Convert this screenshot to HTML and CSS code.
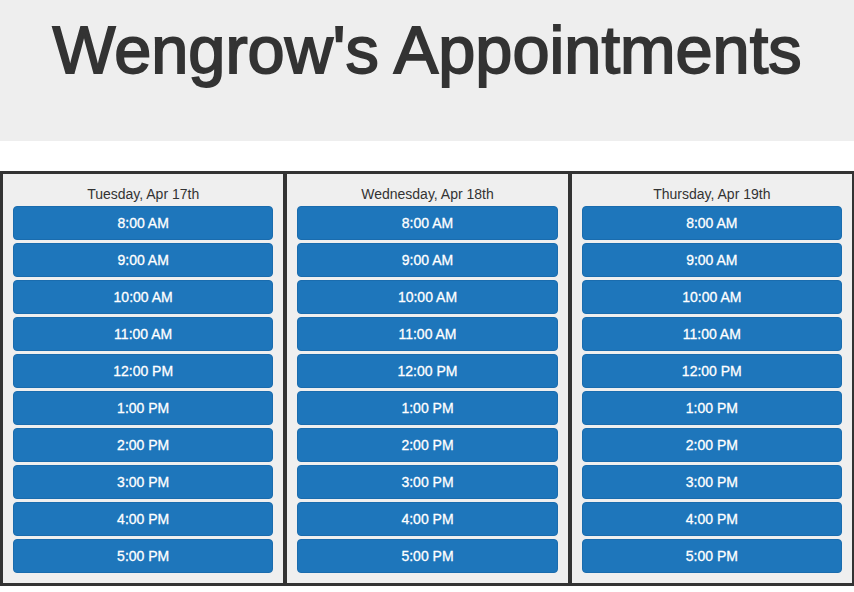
FILE: index.html
```html
<!DOCTYPE html>
<html lang="en">
<head>
<meta charset="utf-8">
<title>Wengrow's Appointments</title>
<link rel="stylesheet" href="styles.css">
</head>
<body>
<header class="jumbotron">
  <h1 class="title">Wengrow's Appointments</h1>
</header>
<main class="days">
  <section class="day">
    <div class="day-label">Tuesday, Apr 17th</div>
    <button class="slot">8:00 AM</button>
    <button class="slot">9:00 AM</button>
    <button class="slot">10:00 AM</button>
    <button class="slot">11:00 AM</button>
    <button class="slot">12:00 PM</button>
    <button class="slot">1:00 PM</button>
    <button class="slot">2:00 PM</button>
    <button class="slot">3:00 PM</button>
    <button class="slot">4:00 PM</button>
    <button class="slot">5:00 PM</button>
  </section>
  <section class="day">
    <div class="day-label">Wednesday, Apr 18th</div>
    <button class="slot">8:00 AM</button>
    <button class="slot">9:00 AM</button>
    <button class="slot">10:00 AM</button>
    <button class="slot">11:00 AM</button>
    <button class="slot">12:00 PM</button>
    <button class="slot">1:00 PM</button>
    <button class="slot">2:00 PM</button>
    <button class="slot">3:00 PM</button>
    <button class="slot">4:00 PM</button>
    <button class="slot">5:00 PM</button>
  </section>
  <section class="day">
    <div class="day-label">Thursday, Apr 19th</div>
    <button class="slot">8:00 AM</button>
    <button class="slot">9:00 AM</button>
    <button class="slot">10:00 AM</button>
    <button class="slot">11:00 AM</button>
    <button class="slot">12:00 PM</button>
    <button class="slot">1:00 PM</button>
    <button class="slot">2:00 PM</button>
    <button class="slot">3:00 PM</button>
    <button class="slot">4:00 PM</button>
    <button class="slot">5:00 PM</button>
  </section>
</main>
</body>
</html>
```

FILE: styles.css
```css
* {
  box-sizing: border-box;
}

html, body {
  margin: 0;
  padding: 0;
  background: #fff;
}

body {
  font-family: "Liberation Sans", Arial, Helvetica, sans-serif;
  color: #333;
  font-size: 14px;
  line-height: 20px;
}

.jumbotron {
  background: #eee;
  padding: 14px 0 55px;
  margin: 0 0 30px;
}

.title {
  margin: 0;
  text-align: center;
  font-size: 66.7px;
  line-height: 72px;
  font-weight: normal;
  -webkit-text-stroke: 1.8px #333;
  color: #333;
}

.days {
  display: flex;
  gap: 4px;
  background: #333;
  padding: 3px 2px 3px 3px;
}

.day {
  flex: 1 1 0;
  min-width: 0;
  background: #efefef;
  padding: 10px 10px 10px;
  display: flex;
  flex-direction: column;
  gap: 3px;
}

.day-label {
  text-align: center;
  font-size: 14px;
  line-height: 20px;
  color: #333;
  margin-bottom: -1px;
}

.slot {
  display: block;
  width: 100%;
  height: 34px;
  margin: 0;
  padding: 6px 12px;
  border: 1px solid #1a6cae;
  border-radius: 4px;
  background: #1e76bb;
  color: #fff;
  font-family: "Liberation Sans", Arial, Helvetica, sans-serif;
  font-size: 14px;
  line-height: 20px;
  text-align: center;
  -webkit-text-stroke: 0.3px #fff;
}
```
